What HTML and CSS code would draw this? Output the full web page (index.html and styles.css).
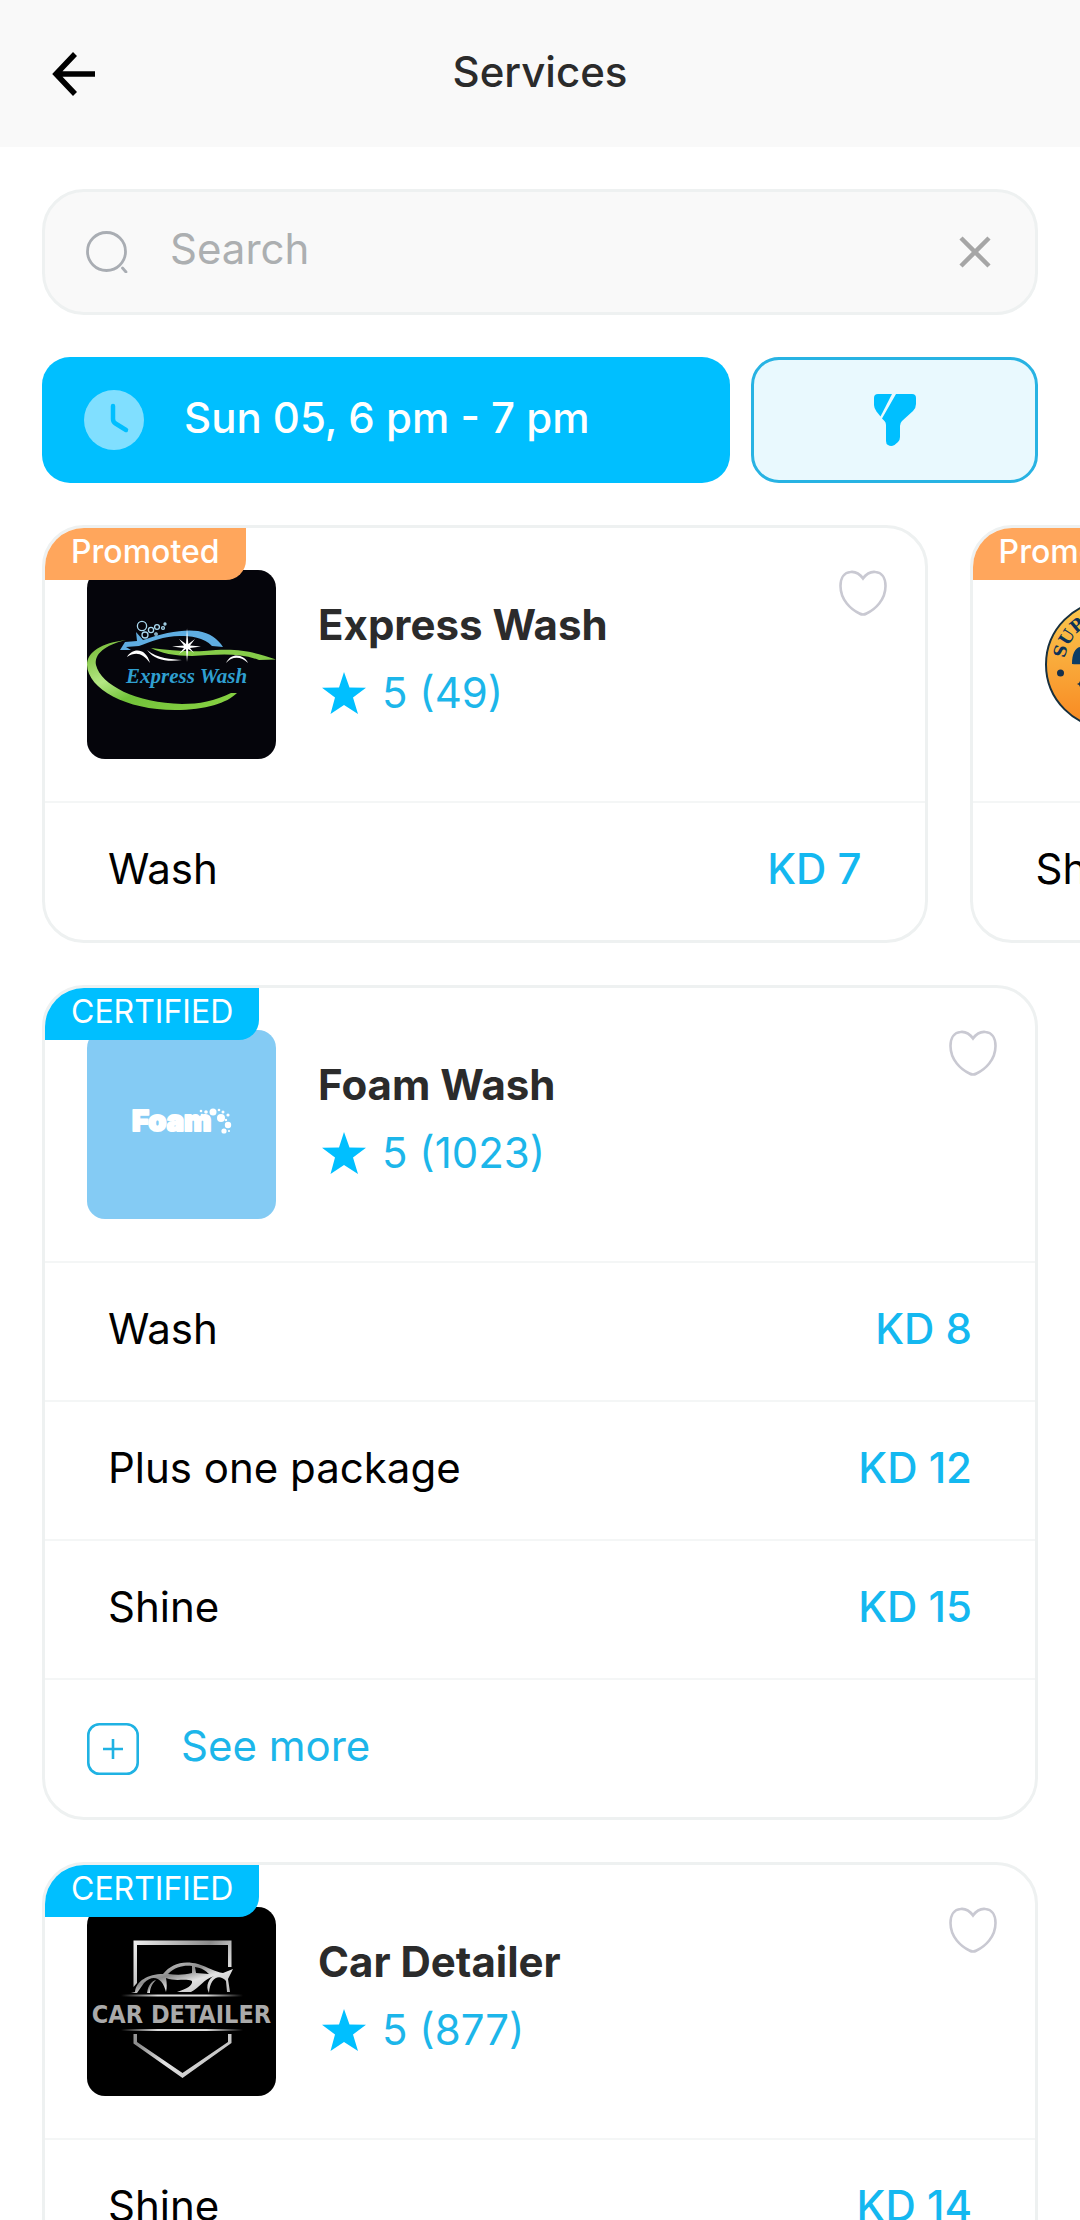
FILE: index.html
```html
<!DOCTYPE html>
<html lang="en">
<head>
<meta charset="utf-8">
<meta name="viewport" content="width=device-width, initial-scale=1.0">
<title>Services</title>
<link rel="stylesheet" href="styles.css">
</head>
<body>

<!-- shared icons -->
<svg class="sprite" width="0" height="0" aria-hidden="true">
  <symbol id="heart" viewBox="0 0 48 46">
    <path d="M24 8.500C20 3 15.500 1.500 11.500 2C5.500 2.500 1.500 7.500 1.500 16C1.500 30 12 39.500 20.500 43.500Q24 45.500 27.500 43.500C36 39.500 46.500 30 46.500 16C46.500 7.500 42.500 2.500 36.500 2C32.500 1.500 28 3 24 8.500Z" fill="none" stroke="#c9c9d2" stroke-width="2.600"/>
  </symbol>
  <symbol id="star" viewBox="0 0 44 42">
    <path d="M22 0L27.500 15.500L44 15.700L31 25.500L36 42L22 33L8.500 42L13 25.500L0 15.700L17 15.500Z" fill="#00bfff"/>
  </symbol>
</svg>

<header class="topbar">
  <button class="icon-btn" aria-label="Back">
    <svg width="44" height="44" viewBox="0 0 44 44"><path d="M43 22H5M23 2L4 22L23 42" fill="none" stroke="#000" stroke-width="5.500"/></svg>
  </button>
  <h1>Services</h1>
</header>

<main>
  <form class="search" role="search">
    <label for="q" aria-label="Search">
      <svg width="42" height="42" viewBox="0 0 42 42"><g fill="none" stroke="#a9adb3" stroke-width="2.800" stroke-linecap="round"><circle cx="20.500" cy="20.500" r="19"/><path d="M36.500 37L40 41"/></g></svg>
    </label>
    <input type="text" id="q" placeholder="Search">
    <button type="reset" class="icon-btn" aria-label="Clear">
      <svg width="32" height="32" viewBox="0 0 32 32"><path d="M2 2L30 30M30 2L2 30" stroke="#a6a6a6" stroke-width="4.500"/></svg>
    </button>
  </form>

  <div class="filters">
    <button class="btn-date">
      <svg width="60" height="60" viewBox="0 0 60 60"><circle cx="30" cy="30" r="30" fill="#80dfff"/><path d="M29 16V29Q29 32 31.500 33.500L42 40" fill="none" stroke="#00bfff" stroke-width="4.500" stroke-linecap="round"/></svg>
      <span>Sun 05, 6 pm - 7 pm</span>
    </button>
    <button class="btn-filter" aria-label="Filter">
      <svg width="42" height="52" viewBox="0 0 42 52" fill="#00bfff"><path d="M4 0H18L6.500 22.500L2.500 17.500Q0 14 0 11V4Q0 0 4 0Z"/><path d="M22 0H38Q42 0 42 4V10Q42 14 39 17L28 27Q26 29 26 32V43Q26 46 24 48L20.500 51Q17 53 14 51Q12 50 12 47V31Q12 28.500 10.500 27L8 24.500Z"/></svg>
    </button>
  </div>

  <div class="carousel">
    <article class="card">
      <span class="badge promoted">Promoted</span>
      <div class="card-head">
        <svg class="logo" viewBox="0 0 189 189">
          <defs>
            <linearGradient id="green" x1="0" y1="0" x2="1" y2="1"><stop offset="0" stop-color="#6db52c"/><stop offset=".35" stop-color="#b5e884"/><stop offset=".55" stop-color="#72c23a"/><stop offset="1" stop-color="#8bd444"/></linearGradient>
          </defs>
          <rect width="189" height="189" fill="#05050b"/>
          <path d="M39 70C14 73 0 82 0 95C1 119 39 140 88 140C119 140 140 133 150 123L144 123C128 131 112 134 95 134C49 133 14 115 9 95C7 84 18 75 39 70Z" fill="url(#green)"/>
          <path d="M64 78C81 80 100 82 117 81C151 78 163 81 189 89.500L172 90C151 82 128 85 105 86C88 86 73 83 64 78Z" fill="#86cc49"/>
          <path d="M33 80L38 72L50 71L49 62L56 70C76 63 96 59 111 61C123 63 131 69 136 77L125 76C117 67 103 66 93 66C77 66 63 72 52 76L39 77L44 80Z" fill="#5fade1"/>
          <g fill="#fff">
            <path d="M40 87C45 78 59 77 63 93C55 82 48 82 40 87Z"/>
            <path d="M139 93C144 82 157 84 161 93C154 86 145 86 139 93Z"/>
            <path d="M60 80C71 89 84 89 95 90C82 92 68 91 60 80Z"/>
            <path d="M100 58L101.300 74L108 69L103 75.500L114 76.500L103 78L107 83L101.300 79L100 92L99 79L92 84L97 78L85 76.500L97 75.500L92 69L99 74Z"/>
          </g>
          <g fill="none" stroke="#a9d9f0" stroke-width="1.300"><circle cx="55" cy="56" r="4.600"/><circle cx="64" cy="60" r="2.600"/><circle cx="58" cy="65" r="3"/><circle cx="70" cy="57" r="2.400"/><circle cx="76" cy="58" r="1.400"/><circle cx="78" cy="54" r="1"/><circle cx="69" cy="64" r="1.200"/></g>
          <text class="logo-express" x="39" y="113">Express Wash</text>
        </svg>
        <div class="info">
          <h2>Express Wash</h2>
          <p class="rating"><svg width="44" height="42"><use href="#star"/></svg>5 (49)</p>
        </div>
        <button class="icon-btn fav" aria-label="Add to favourites"><svg width="48" height="46"><use href="#heart"/></svg></button>
      </div>
      <ul class="services">
        <li><span>Wash</span><b>KD 7</b></li>
      </ul>
    </article>

    <article class="card">
      <span class="badge promoted">Promoted</span>
      <div class="card-head">
        <svg class="logo" viewBox="0 0 189 189">
          <defs>
            <linearGradient id="sun" x1="0" y1="0" x2="0" y2="1"><stop offset="0" stop-color="#fbc94d"/><stop offset=".5" stop-color="#f9a93a"/><stop offset="1" stop-color="#f98720"/></linearGradient>
            <path id="arc" d="M49.500 94.500A45 45 0 0 1 139.500 94.500"/>
          </defs>
          <circle cx="94.500" cy="94.500" r="63.500" fill="url(#sun)" stroke="#17303f" stroke-width="2"/>
          <text class="logo-super"><textPath href="#arc" startOffset="6">SUPER</textPath></text>
          <circle cx="45.500" cy="103" r="3.500" fill="#14304c"/>
          <path d="M57 94C57 84 60 78 65 77C75 82 84 78 94 79V90C82 88 70 96 57 94Z" fill="#0c3d66"/>
          <path d="M65 111L66 113L68 114L66 115L65 117L64 115L62 114L64 113Z" fill="#14304c"/>
        </svg>
      </div>
      <ul class="services">
        <li><span>Shine</span></li>
      </ul>
    </article>
  </div>

  <article class="card">
    <span class="badge">CERTIFIED</span>
    <div class="card-head">
      <svg class="logo" viewBox="0 0 189 189">
        <rect width="189" height="189" fill="#84cbf4"/>
        <text class="logo-foam" x="45" y="101">Foam</text>
        <g fill="#fff"><circle cx="126" cy="82" r="3.500"/><circle cx="134" cy="88" r="4"/><circle cx="141" cy="95" r="3.200"/><circle cx="137" cy="101" r="2.600"/><circle cx="119" cy="82" r="1.800"/><circle cx="114" cy="81" r="1.300"/><circle cx="115" cy="85" r="1.300"/><circle cx="132" cy="80" r="1.300"/><circle cx="136" cy="82" r="1.500"/><circle cx="141" cy="85" r="1.600"/><circle cx="139" cy="90" r="1.200"/><circle cx="122" cy="87" r="1.200"/><circle cx="142" cy="101" r="1.100"/></g>
      </svg>
      <div class="info">
        <h2>Foam Wash</h2>
        <p class="rating"><svg width="44" height="42"><use href="#star"/></svg>5 (1023)</p>
      </div>
      <button class="icon-btn fav" aria-label="Add to favourites"><svg width="48" height="46"><use href="#heart"/></svg></button>
    </div>
    <ul class="services">
      <li><span>Wash</span><b>KD 8</b></li>
      <li><span>Plus one package</span><b>KD 12</b></li>
      <li><span>Shine</span><b>KD 15</b></li>
    </ul>
    <button class="see-more">
      <svg width="52" height="52" viewBox="0 0 52 52" fill="none" stroke="#1fb2e3" stroke-width="2.600"><rect x="1.300" y="1.300" width="49.400" height="49.400" rx="11"/><path d="M26 16V36M16 26H36"/></svg>
      <span>See more</span>
    </button>
  </article>

  <article class="card">
    <span class="badge">CERTIFIED</span>
    <div class="card-head">
      <svg class="logo" viewBox="0 0 189 189">
        <defs>
          <linearGradient id="silver" x1="0" y1="0" x2="1" y2="1"><stop offset="0" stop-color="#f2f2f2"/><stop offset=".4" stop-color="#8a8a8a"/><stop offset=".6" stop-color="#e2e2e2"/><stop offset="1" stop-color="#b5b5b5"/></linearGradient>
          <linearGradient id="line" x1="0" x2="1" y1="0" y2="0"><stop offset="0" stop-color="#000"/><stop offset=".3" stop-color="#ddd"/><stop offset=".7" stop-color="#ddd"/><stop offset="1" stop-color="#000"/></linearGradient>
        </defs>
        <rect width="189" height="189" fill="#000"/>
        <path d="M46.500 33.500H144.500V60H141V38H50V76L46.500 80ZM46.500 127H50V135L95.500 166L141 135V127H144.500V136L95.500 171L46.500 136.500Z" fill="url(#silver)"/>
        <g fill="url(#silver)">
          <path d="M48 85C49 74 61 67 76 67C84 57 96 53 111 57C121 60 128 65 136 66L146 62L141 72L143 85H140L139 74C132 66 123 71 122 86C118 79 122 71 127 69C117 72 112 81 104 85H90C100 82 106 78 105 74C98 71 89 75 79 71C80 76 80 81 79 85C76 72 67 66 57 76L50 86H44Z"/>
          <path d="M60 86C61 78 65 74 69 73C64 78 63 82 63 86Z"/>
        </g>
        <path d="M81 67C89 59 98 58 105 59V66C97 68 90 68 81 67ZM108 60C115 61 119 64 122 67L109 66Z" fill="#000"/>
        <path d="M34 87.500H156V89.500H34ZM34 122H156V124H34Z" fill="url(#line)"/>
        <text class="logo-detailer" x="94.500" y="116">CAR DETAILER</text>
      </svg>
      <div class="info">
        <h2>Car Detailer</h2>
        <p class="rating"><svg width="44" height="42"><use href="#star"/></svg>5 (877)</p>
      </div>
      <button class="icon-btn fav" aria-label="Add to favourites"><svg width="48" height="46"><use href="#heart"/></svg></button>
    </div>
    <ul class="services">
      <li><span>Shine</span><b>KD 14</b></li>
    </ul>
  </article>
</main>

</body>
</html>
```
FILE: styles.css
```css
:root {
  --blue: #00bfff;
  --blue-text: #1cb6ea;
  --border: #eef1f1;
  --gap: 42px;
}
* {
  box-sizing: border-box;
}
body {
  margin: 0;
  height: 100vh;
  display: flex;
  flex-direction: column;
  font-family: Inter, "Liberation Sans", sans-serif;
  font-size: 42px;
  line-height: 50px;
  color: #000;
  background: #fff;
}
h1, h2, p, ul {
  margin: 0;
  padding: 0;
}
button, input {
  font: inherit;
  border: none;
  background: none;
  padding: 0;
}
button {
  cursor: pointer;
}
svg {
  display: block;
  flex-shrink: 0;
}
.sprite {
  position: absolute;
}
.icon-btn {
  display: block;
  flex-shrink: 0;
}

/* top bar */
.topbar {
  flex-shrink: 0;
  display: grid;
  grid-template-columns: 44px 1fr 44px;
  align-items: center;
  height: 147px;
  padding: 0 52px;
  background: #f9f9f9;
}
.topbar h1 {
  font-size: 42px;
  font-weight: 500;
  text-align: center;
  padding-bottom: 4px;
  color: #2b2b2b;
}

main {
  flex: 1;
  min-height: 0;
  display: flex;
  flex-direction: column;
  gap: var(--gap);
  padding: var(--gap);
  overflow-y: auto;
  scrollbar-width: none;
}
main > * {
  flex-shrink: 0;
}

.search {
  display: flex;
  align-items: center;
  gap: 42px;
  height: 126px;
  padding: 0 44px 0 41px;
  border: 3px solid var(--border);
  border-radius: 42px;
  background: #f9f9f9;
}
.search input {
  flex: 1;
  min-width: 0;
  padding-bottom: 6px;
  outline: none;
}
.search input::placeholder {
  color: #acafb1;
  opacity: 1;
}

.filters {
  display: grid;
  grid-template-columns: 12fr 5fr;
  gap: 21px;
}
.btn-date, .btn-filter {
  display: flex;
  align-items: center;
  height: 126px;
  border-radius: 28px;
}
.btn-date {
  gap: 40px;
  padding: 0 42px;
  font-weight: 500;
  color: #fff;
  background: var(--blue);
}
.btn-date span {
  padding-bottom: 4px;
}
.btn-filter {
  justify-content: center;
  border: 3px solid #28b3e3;
  background: #e9f9fe;
}

.carousel {
  display: flex;
  gap: var(--gap);
  margin: 0 -42px;
  padding: 0 var(--gap);
  overflow-x: auto;
  scrollbar-width: none;
}
.carousel .card {
  flex: 0 0 82vw;
}

/* company card */
.card {
  position: relative;
  overflow: hidden;
  border: 3px solid var(--border);
  border-radius: 42px;
}
.badge {
  position: absolute;
  top: 0;
  left: 0;
  padding: 4px 26px 8px;
  font-size: 32px;
  line-height: 40px;
  color: #fff;
  background: var(--blue);
  border-bottom-right-radius: 20px;
}
.badge.promoted {
  font-weight: 500;
  background: #ffa65c;
}
.card-head {
  display: flex;
  gap: 42px;
  padding: 42px 38px 42px 42px;
}
.logo {
  width: 189px;
  height: 189px;
  border-radius: 18px;
}
.info {
  flex: 1;
  padding-top: 30px;
}
.info h2 {
  font-size: 42px;
  font-weight: 700;
  color: #2b2b2b;
}
.fav {
  align-self: flex-start;
}
.rating {
  display: flex;
  align-items: center;
  gap: 16px;
  margin-top: 18px;
  padding-left: 4px;
  color: var(--blue-text);
}
.services {
  list-style: none;
}
.services li, .see-more {
  display: flex;
  align-items: center;
  width: 100%;
  height: 139px;
  border-top: 2px solid #f4f6f6;
}
.services li {
  justify-content: space-between;
  padding: 0 63px 6px;
}
.services b {
  font-weight: 500;
  color: #14b8f0;
}
.see-more {
  gap: 42px;
  padding: 0 42px;
  color: var(--blue-text);
}
.see-more span {
  padding-bottom: 6px;
}

/* lettering inside the logos */
.logo-express {
  font: italic bold 21px "Liberation Serif", serif;
  fill: #2f9fd0;
}
.logo-super {
  font: bold 17px "DejaVu Serif", serif;
  fill: #0c3358;
}
.logo-foam {
  font: 900 29px Inter, sans-serif;
  fill: #fff;
  stroke: #fff;
  stroke-width: 2px;
  stroke-linejoin: round;
}
.logo-detailer {
  font: bold 25px "DejaVu Sans Condensed", "DejaVu Sans", sans-serif;
  text-anchor: middle;
  fill: #aaa;
}
```
